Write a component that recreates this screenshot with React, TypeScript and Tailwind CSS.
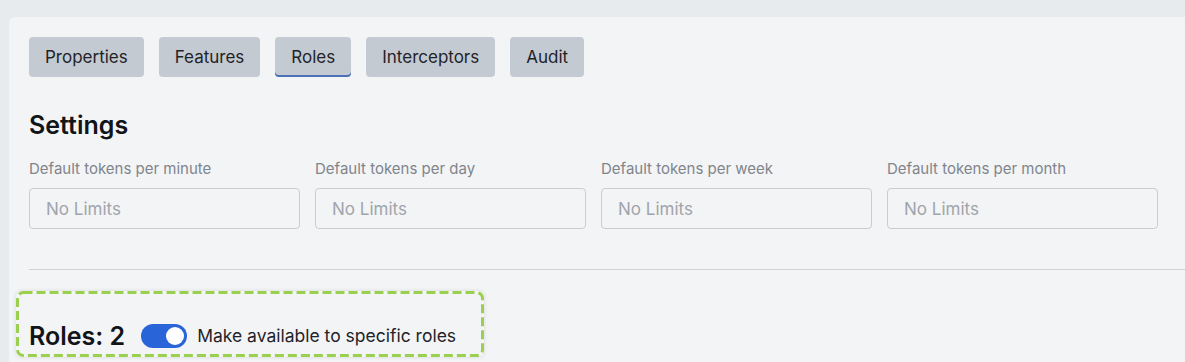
import { useState } from "react";

const tabs = ["Properties", "Features", "Roles", "Interceptors", "Audit"];

const limits = [
  "Default tokens per minute",
  "Default tokens per day",
  "Default tokens per week",
  "Default tokens per month",
];

export default function App() {
  const [active, setActive] = useState("Roles");
  const [enabled, setEnabled] = useState(true);

  return (
    <div className="h-[362px] w-full overflow-hidden bg-[#e8ebee] pl-[9px] pt-[17px] font-['Inter','Liberation_Sans',sans-serif]">
      <div className="h-full rounded-tl-md bg-[#f3f4f6] pl-5 pt-5">
        {/* tabs */}
        <div className="flex gap-[15px]">
          {tabs.map((tab) => (
            <button
              key={tab}
              onClick={() => setActive(tab)}
              className={`h-10 rounded px-4 pt-[2px] text-[17px] text-[#1f2328] bg-[#c4cad1] ${
                active === tab ? "shadow-[inset_0_-2px_0_#4a70b8]" : ""
              }`}
            >
              {tab}
            </button>
          ))}
        </div>

        {/* settings */}
        <h2 className="mt-[33px] text-[25px] font-semibold leading-[30px] text-[#111418]">
          Settings
        </h2>
        <div className="mt-[19px] flex gap-[15px]">
          {limits.map((label) => (
            <div key={label} className="w-[271px]">
              <div className="text-[15px] leading-5 text-[#80858c]">{label}</div>
              <input
                placeholder="No Limits"
                className="mt-[9px] h-[41px] w-full rounded border border-[#c9ccd0] bg-[#f3f4f6] px-4 text-[17px] text-[#374151] placeholder:text-[#a0a5ab] outline-none"
              />
            </div>
          ))}
        </div>

        <div className="mt-[40px] h-px bg-[#cfd2d6]" />

        {/* roles, highlighted */}
        <div className="relative -ml-[13px] mt-[21px] h-[66px] w-[468px] rounded-md shadow-[0_0_4px_rgba(0,0,0,0.12)]">
          <svg className="absolute inset-0" width="468" height="66">
            <rect
              x="1.5"
              y="1.5"
              width="465"
              height="63"
              rx="6"
              fill="none"
              stroke="#9bd04e"
              strokeWidth="3"
              strokeDasharray="9 4"
            />
          </svg>
          <div className="flex items-center pl-[13px] pt-[29px]">
            <span className="text-[25px] font-semibold leading-8 text-[#111418]">Roles: 2</span>
            <button
              onClick={() => setEnabled(!enabled)}
              className={`ml-4 flex h-6 w-[46px] items-center rounded-full px-[3px] ${
                enabled ? "justify-end bg-[#2a64d9]" : "justify-start bg-[#c4cad1]"
              }`}
            >
              <span className="h-[18px] w-[18px] rounded-full bg-white" />
            </button>
            <span className="ml-[10px] text-[17.5px] text-[#1f2328]">
              Make available to specific roles
            </span>
          </div>
        </div>
      </div>
    </div>
  );
}
